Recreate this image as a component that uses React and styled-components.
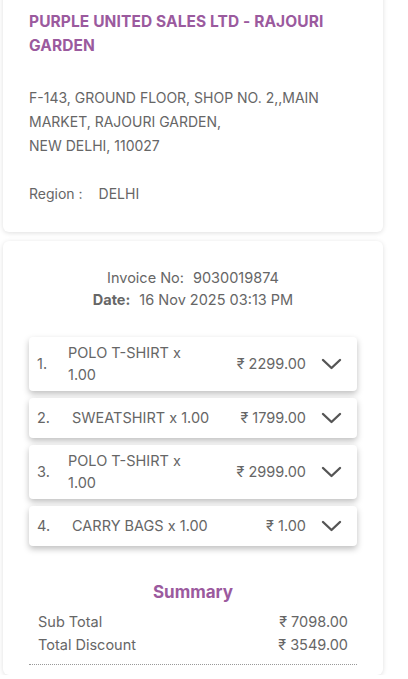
import React from 'react';
import styled, { createGlobalStyle } from 'styled-components';

const Global = createGlobalStyle`
body{
  margin:0;
  background:#ffffff;
  font-family:"Inter","Noto Sans",sans-serif;
  color:#666;
  overflow:hidden;
}
`;

const Page = styled.div`
display:flex;
flex-direction:column;
gap:9px;
width:380px;
margin-left:3px;
margin-top:-12px;
`;

const Card = styled.div`
background:#fff;
border-radius:6px;
box-shadow:0 1px 5px rgba(0,0,0,0.13);
padding:${props => props.pad || "20px 26px"};
`;

const ShopName = styled.p`
margin:0;
color:#9b5a9e;
font-size:15.5px;
font-weight:700;
line-height:24px;
letter-spacing:0.1px;
`;

const Address = styled.p`
margin:28px 0 0;
font-size:14px;
line-height:24px;
color:#666;
`;

const Region = styled.p`
margin:24px 0 0;
font-size:14px;
line-height:24px;
color:#666;
`;

const Gap = styled.span`
display:inline-block;
width:${props => props.w}px;
`;

const InvoiceHead = styled.div`
display:flex;
flex-direction:column;
align-items:center;
font-size:14.5px;
line-height:22px;
color:#666;
margin-bottom:26px;
`;

const Bold = styled.b`
font-weight:700;
margin-right:9px;
`;

const Label = styled.span`
margin-right:9px;
`;

const ItemList = styled.div`
display:flex;
flex-direction:column;
gap:7px;
`;

const Item = styled.div`
display:flex;
align-items:center;
min-height:40px;
padding:5px 15px 5px 8px;
box-sizing:border-box;
border-radius:4px;
background:#fff;
box-shadow:0 3px 6px rgba(0,0,0,0.25);
font-size:14.5px;
line-height:22px;
color:#666;
`;

const Num = styled.span`
width:${props => props.wide ? "35px" : "31px"};
flex-shrink:0;
`;

const Name = styled.span`
width:${props => props.wide ? "150px" : "122px"};
flex-shrink:0;
`;

const Price = styled.span`
flex:1;
text-align:right;
margin-right:15px;
white-space:nowrap;
`;

const Chevron = styled.svg`
flex-shrink:0;
color:#555;
`;

const SummaryTitle = styled.h3`
margin:34px 0 6px;
text-align:center;
color:#9b5a9e;
font-size:17px;
font-weight:700;
line-height:24px;
`;

const Row = styled.div`
display:flex;
justify-content:space-between;
padding:0 9px;
font-size:14.5px;
line-height:23px;
color:#666;
`;

const Dotted = styled.div`
margin-top:8px;
border-top:1px dotted #999;
`;

const items = [
  { n: "1.", name: "POLO T-SHIRT x", qty: "1.00", price: "₹ 2299.00" },
  { n: "2.", name: "SWEATSHIRT x", qty: "1.00", price: "₹ 1799.00" },
  { n: "3.", name: "POLO T-SHIRT x", qty: "1.00", price: "₹ 2999.00" },
  { n: "4.", name: "CARRY BAGS x", qty: "1.00", price: "₹ 1.00" },
];

const App = () => {
  return <Page>
    <Global />
    <Card pad="22px 26px 26px">
      <ShopName>PURPLE UNITED SALES LTD - RAJOURI GARDEN</ShopName>
      <Address>F-143, GROUND FLOOR, SHOP NO. 2,,MAIN MARKET, RAJOURI GARDEN,<br />NEW DELHI, 110027</Address>
      <Region>Region :<Gap w={16} />DELHI</Region>
    </Card>
    <Card pad="26px 26px 10px">
      <InvoiceHead>
        <div><Label>Invoice No:</Label>9030019874</div>
        <div><Bold>Date:</Bold>16 Nov 2025 03:13 PM</div>
      </InvoiceHead>
      <ItemList>
        {items.map((it, i) => {
          const wide = i === 1 || i === 3;
          return <Item key={i}>
            <Num wide={wide}>{it.n}</Num>
            <Name wide={wide}>{it.name} {it.qty}</Name>
            <Price>{it.price}</Price>
            <Chevron width="21" height="12" viewBox="0 0 21 12" fill="none" stroke="currentColor" strokeWidth="2.4" strokeLinecap="round" strokeLinejoin="round">
              <polyline points="2,2 10.5,10 19,2" />
            </Chevron>
          </Item>
        })}
      </ItemList>
      <SummaryTitle>Summary</SummaryTitle>
      <Row><span>Sub Total</span><span>₹ 7098.00</span></Row>
      <Row><span>Total Discount</span><span>₹ 3549.00</span></Row>
      <Dotted />
    </Card>
  </Page>
}

export default App;
